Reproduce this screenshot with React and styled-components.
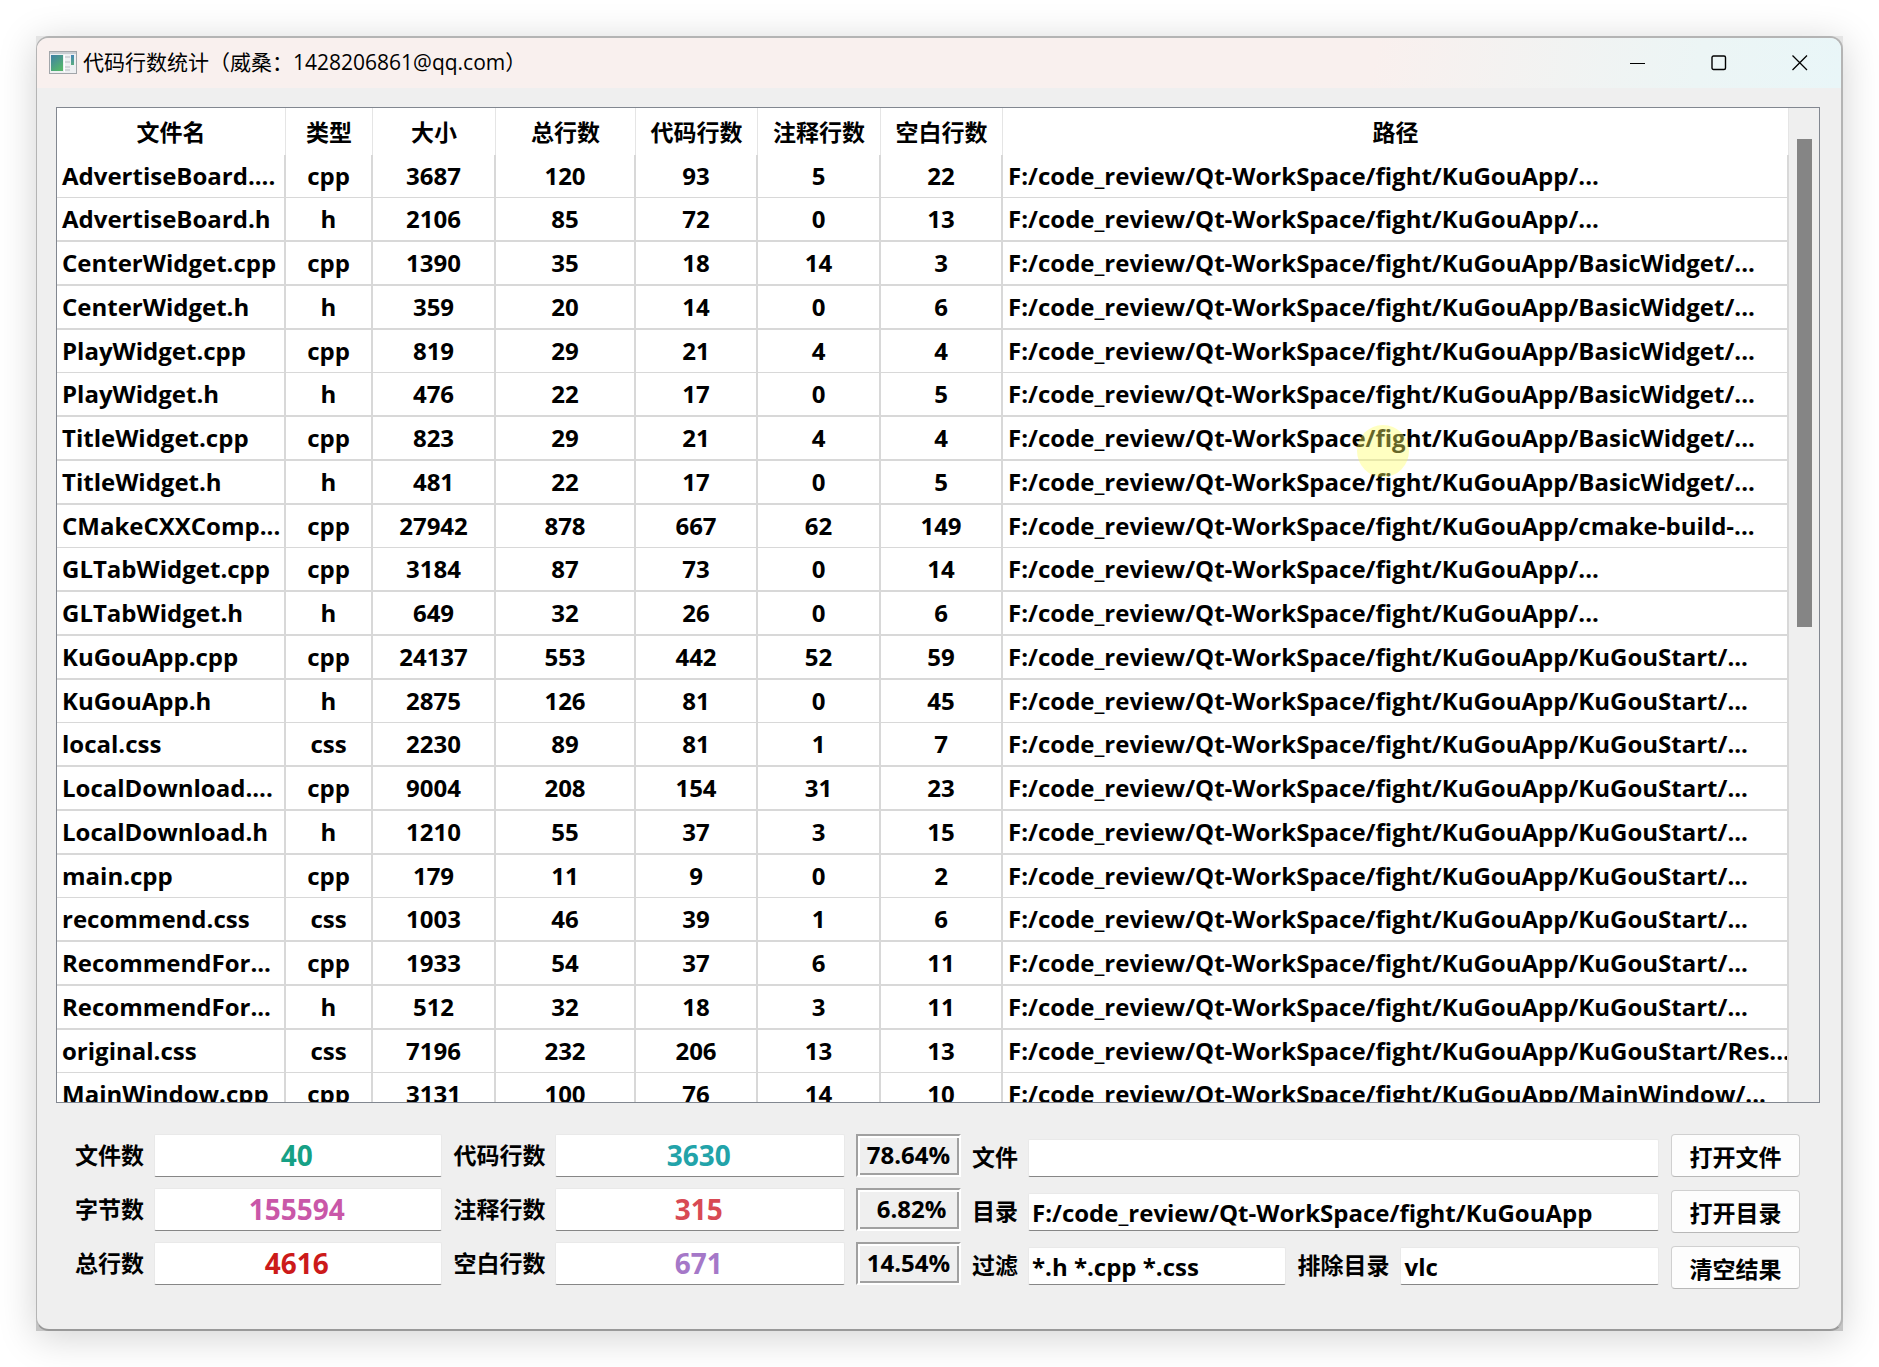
import React, { useState } from 'react'
import styled, { createGlobalStyle } from 'styled-components'

const GlobalStyle = createGlobalStyle`
    * {
        box-sizing: border-box;
    }
    body {
        margin: 0;
        background: #fff;
        color: #000;
        font-family: 'Open Sans', 'Noto Sans CJK SC', sans-serif;
        font-variant-ligatures: none;
    }
    button, input, output {
        font-family: inherit;
    }
`

const Page = styled.div`
    height: 100vh;
    min-height: 600px;
    padding: 36px;
`

const WindowShadow = styled.div`
    height: 100%;
    background: linear-gradient(#e4e4e4, #c4c4c4);
    box-shadow: 0 6px 36px rgba(0, 0, 0, 0.18);
`

const Window = styled.main`
    height: 100%;
    display: flex;
    flex-direction: column;
    overflow: hidden;
    background: #efefef;
    border: solid #b4b4b4;
    border-width: 2px 2px 2px 1px;
    border-bottom-color: #999;
    border-radius: 13px;
`

const TitleBar = styled.header`
    flex: none;
    height: 50px;
    padding: 0 1px 0 12px;
    display: flex;
    align-items: center;
    background: linear-gradient(100deg, #f9f0ee 74%, #ecf5f5 92%, #e9f6f8);
`

const Title = styled.h1`
    flex: 1;
    margin: 0;
    padding: 0 0 2px 6px;
    font-size: 21px;
    line-height: 28px;
    font-weight: 400;
`

const TitleButton = styled.button`
    width: 81px;
    height: 50px;
    padding: 0;
    border: none;
    background: none;
    display: flex;
    align-items: center;
    justify-content: center;
    &:hover {
        background: #e0e0e0;
    }
`

const Content = styled.div`
    flex: 1;
    min-height: 0;
    display: flex;
    flex-direction: column;
    padding: 19px 21px 40px 19px;
`

const TableView = styled.section`
    position: relative;
    flex: 1;
    min-height: 0;
    display: flex;
    border: 1px solid #828790;
    background: #fff;
`

const TableScroll = styled.div`
    flex: 1;
    min-width: 0;
    overflow: hidden;
`

const StyledTable = styled.table`
    width: 100%;
    table-layout: fixed;
    border-collapse: separate;
    border-spacing: 0;
    font-size: 24px;
    line-height: 32px;
    font-weight: 700;
`

const Col = styled.col`
    width: ${(props) => props.$width};
`

const HeadCell = styled.th`
    height: 47px;
    padding: 1px 0 0;
    font-size: 23px;
    border-right: 1px solid #e5e5e5;
`

const Cell = styled.td`
    height: 44px;
    padding: 0 5px 1px;
    text-align: ${(props) => (props.$left ? 'left' : 'center')};
    white-space: nowrap;
    overflow: hidden;
    border: solid #d8d8d8;
    border-width: 0 2px 2px 0;
    tr:nth-child(4n + 1) > & {
        height: 43px;
        border-bottom-width: 1px;
    }
`

const ScrollBar = styled.div`
    flex: none;
    width: 30px;
    padding: 31px 7px 0 8px;
    background: #efefef;
`

const ScrollThumb = styled.div`
    height: 488px;
    background: #858585;
`

const CursorSpot = styled.div`
    position: absolute;
    top: 317px;
    left: 1300px;
    width: 52px;
    height: 52px;
    border-radius: 50%;
    background: rgba(255, 255, 100, 0.4);
    pointer-events: none;
`

const Footer = styled.form`
    flex: none;
    display: flex;
    align-items: flex-start;
    gap: 12px;
    padding: 31px 20px 0 19px;
`

const FieldGrid = styled.div`
    flex: 1;
    display: grid;
    grid-template-columns: 68px 288fr 91px 289fr 105px 45px 630fr;
    grid-auto-rows: 43px;
    gap: 11px;
    align-items: end;
`

const Label = styled.label`
    flex: none;
    font-size: 23px;
    font-weight: 700;
    line-height: ${(props) => (props.$short ? '36px' : '43px')};
    padding-bottom: ${(props) => (props.$short ? '2px' : '0')};
    white-space: nowrap;
`

const LineEdit = styled.input`
    flex: 1;
    width: 100%;
    min-width: 0;
    height: 38px;
    padding: 0 3px;
    border: 1px solid #e9e9e9;
    border-bottom-color: #868686;
    border-radius: 2px;
    background: #fff;
    font-size: 24px;
    font-weight: 700;
    outline: none;
`

const StatEdit = styled(LineEdit)`
    height: 43px;
    padding: 0 6px 1px 3px;
    text-align: center;
    font-size: 28px;
    color: ${(props) => props.$color};
`

const Percent = styled.output`
    height: 43px;
    border: 2px solid #a0a0a0;
    border-right-color: #fff;
    border-bottom-color: #fff;
    box-shadow: inset 2px 2px 0 #fff, inset -2px -2px 0 #a0a0a0;
    font-size: 24px;
    font-weight: 700;
    line-height: 38px;
    text-align: center;
    white-space: pre;
`

const FilterRow = styled.div`
    display: flex;
    gap: 11px;
`

const ButtonColumn = styled.div`
    display: flex;
    flex-direction: column;
    gap: 13px;
`

const PushButton = styled.button`
    width: 129px;
    height: 43px;
    padding: 0;
    border: 1px solid #d0d0d0;
    border-bottom-color: #b8b8b8;
    border-radius: 4px;
    background: #fdfdfd;
    font-size: 23px;
    font-weight: 700;
    color: #000;
    &:hover {
        background: #f5f5f5;
    }
`

const ROOT = 'F:/code_review/Qt-WorkSpace/fight/KuGouApp/'

const columns = [
    { title: '文件名', width: '229px', left: true },
    { title: '类型', width: '87px' },
    { title: '大小', width: '123px' },
    { title: '总行数', width: '140px' },
    { title: '代码行数', width: '122px' },
    { title: '注释行数', width: '123px' },
    { title: '空白行数', width: '122px' },
    { title: '路径', width: 'auto', left: true },
]

const files = [
    ['AdvertiseBoard....', 'cpp', 3687, 120, 93, 5, 22, '...'],
    ['AdvertiseBoard.h', 'h', 2106, 85, 72, 0, 13, '...'],
    ['CenterWidget.cpp', 'cpp', 1390, 35, 18, 14, 3, 'BasicWidget/...'],
    ['CenterWidget.h', 'h', 359, 20, 14, 0, 6, 'BasicWidget/...'],
    ['PlayWidget.cpp', 'cpp', 819, 29, 21, 4, 4, 'BasicWidget/...'],
    ['PlayWidget.h', 'h', 476, 22, 17, 0, 5, 'BasicWidget/...'],
    ['TitleWidget.cpp', 'cpp', 823, 29, 21, 4, 4, 'BasicWidget/...'],
    ['TitleWidget.h', 'h', 481, 22, 17, 0, 5, 'BasicWidget/...'],
    ['CMakeCXXComp...', 'cpp', 27942, 878, 667, 62, 149, 'cmake-build-...'],
    ['GLTabWidget.cpp', 'cpp', 3184, 87, 73, 0, 14, '...'],
    ['GLTabWidget.h', 'h', 649, 32, 26, 0, 6, '...'],
    ['KuGouApp.cpp', 'cpp', 24137, 553, 442, 52, 59, 'KuGouStart/...'],
    ['KuGouApp.h', 'h', 2875, 126, 81, 0, 45, 'KuGouStart/...'],
    ['local.css', 'css', 2230, 89, 81, 1, 7, 'KuGouStart/...'],
    ['LocalDownload....', 'cpp', 9004, 208, 154, 31, 23, 'KuGouStart/...'],
    ['LocalDownload.h', 'h', 1210, 55, 37, 3, 15, 'KuGouStart/...'],
    ['main.cpp', 'cpp', 179, 11, 9, 0, 2, 'KuGouStart/...'],
    ['recommend.css', 'css', 1003, 46, 39, 1, 6, 'KuGouStart/...'],
    ['RecommendFor...', 'cpp', 1933, 54, 37, 6, 11, 'KuGouStart/...'],
    ['RecommendFor...', 'h', 512, 32, 18, 3, 11, 'KuGouStart/...'],
    ['original.css', 'css', 7196, 232, 206, 13, 13, 'KuGouStart/Res...'],
    ['MainWindow.cpp', 'cpp', 3131, 100, 76, 14, 10, 'MainWindow/...'],
]

const AppIcon = () => (
    <svg width='28' height='24' viewBox='0 0 28 24' aria-hidden='true'>
        <defs>
            <linearGradient id='screen' x1='0' y1='0' x2='0.6' y2='1'>
                <stop offset='0' stopColor='#3f7fa6' />
                <stop offset='1' stopColor='#54b56c' />
            </linearGradient>
            <linearGradient id='strip' x1='0' y1='0' x2='0' y2='1'>
                <stop offset='0' stopColor='#4585b5' />
                <stop offset='1' stopColor='#5aae80' />
            </linearGradient>
        </defs>
        <rect x='0.5' y='0.5' width='27' height='22' fill='#eef0f2' stroke='#a2a6aa' />
        <rect x='1' y='1' width='26' height='2' fill='#c9cdd2' />
        <rect x='2' y='4' width='12' height='16' fill='url(#screen)' />
        <path d='M15.5 4v17' stroke='#fff' />
        <path d='M16 6h5M16 11h5M16 16h5M16 19h5' stroke='#d3d6da' strokeWidth='2' />
        <rect x='22' y='4' width='3' height='10' fill='url(#strip)' />
    </svg>
)

const Stat = ({ id, label, value, color }) => (
    <>
        <Label htmlFor={id}>{label}</Label>
        <StatEdit id={id} value={value} $color={color} readOnly />
    </>
)

const App = () => {
    const [file, setFile] = useState('')
    const [dir, setDir] = useState('F:/code_review/Qt-WorkSpace/fight/KuGouApp')
    const [filter, setFilter] = useState('*.h *.cpp *.css')
    const [exclude, setExclude] = useState('vlc')

    return (
        <Page>
            <GlobalStyle />
            <WindowShadow>
                <Window>
                    <TitleBar>
                        <AppIcon />
                        <Title>代码行数统计（威桑：1428206861@qq.com）</Title>
                        <TitleButton type='button' aria-label='最小化'>
                            <svg width='16' height='16' viewBox='0 0 16 16'>
                                <path d='M0 8.5h15' stroke='#000' />
                            </svg>
                        </TitleButton>
                        <TitleButton type='button' aria-label='最大化'>
                            <svg width='16' height='16' viewBox='0 0 16 16'>
                                <rect x='1' y='1' width='13.5' height='13.5' rx='1.5' fill='none' stroke='#000' strokeWidth='1.4' />
                            </svg>
                        </TitleButton>
                        <TitleButton type='button' aria-label='关闭'>
                            <svg width='16' height='16' viewBox='0 0 16 16'>
                                <path d='M0.5 0.5l14.5 14.5M15 0.5l-14.5 14.5' stroke='#000' strokeWidth='1.3' />
                            </svg>
                        </TitleButton>
                    </TitleBar>
                    <Content>
                        <TableView>
                            <TableScroll>
                                <StyledTable>
                                    <colgroup>
                                        {columns.map((col) => (
                                            <Col key={col.title} $width={col.width} />
                                        ))}
                                    </colgroup>
                                    <thead>
                                        <tr>
                                            {columns.map((col) => (
                                                <HeadCell key={col.title}>{col.title}</HeadCell>
                                            ))}
                                        </tr>
                                    </thead>
                                    <tbody>
                                        {files.map((row, i) => (
                                            <tr key={i}>
                                                {row.map((value, j) => (
                                                    <Cell key={j} $left={columns[j].left}>
                                                        {j === 7 ? ROOT + value : value}
                                                    </Cell>
                                                ))}
                                            </tr>
                                        ))}
                                    </tbody>
                                </StyledTable>
                            </TableScroll>
                            <ScrollBar>
                                <ScrollThumb />
                            </ScrollBar>
                            <CursorSpot />
                        </TableView>
                        <Footer onSubmit={(e) => e.preventDefault()}>
                            <FieldGrid>
                                <Stat id='files' label='文件数' value='40' color='#16a085' />
                                <Stat id='code' label='代码行数' value='3630' color='#22a3a9' />
                                <Percent htmlFor='code'>78.64%</Percent>
                                <Label $short htmlFor='file'>文件</Label>
                                <LineEdit id='file' value={file} onChange={(e) => setFile(e.target.value)} />

                                <Stat id='bytes' label='字节数' value='155594' color='#c957a8' />
                                <Stat id='comments' label='注释行数' value='315' color='#d84a54' />
                                <Percent htmlFor='comments'> 6.82%</Percent>
                                <Label $short htmlFor='dir'>目录</Label>
                                <LineEdit id='dir' value={dir} onChange={(e) => setDir(e.target.value)} />

                                <Stat id='total' label='总行数' value='4616' color='#cc1a1a' />
                                <Stat id='blank' label='空白行数' value='671' color='#a578c8' />
                                <Percent htmlFor='blank'>14.54%</Percent>
                                <Label $short htmlFor='filter'>过滤</Label>
                                <FilterRow>
                                    <LineEdit id='filter' value={filter} onChange={(e) => setFilter(e.target.value)} />
                                    <Label $short htmlFor='exclude'>排除目录</Label>
                                    <LineEdit id='exclude' value={exclude} onChange={(e) => setExclude(e.target.value)} />
                                </FilterRow>
                            </FieldGrid>
                            <ButtonColumn>
                                <PushButton type='button'>打开文件</PushButton>
                                <PushButton type='button'>打开目录</PushButton>
                                <PushButton type='button'>清空结果</PushButton>
                            </ButtonColumn>
                        </Footer>
                    </Content>
                </Window>
            </WindowShadow>
        </Page>
    )
}

export default App
